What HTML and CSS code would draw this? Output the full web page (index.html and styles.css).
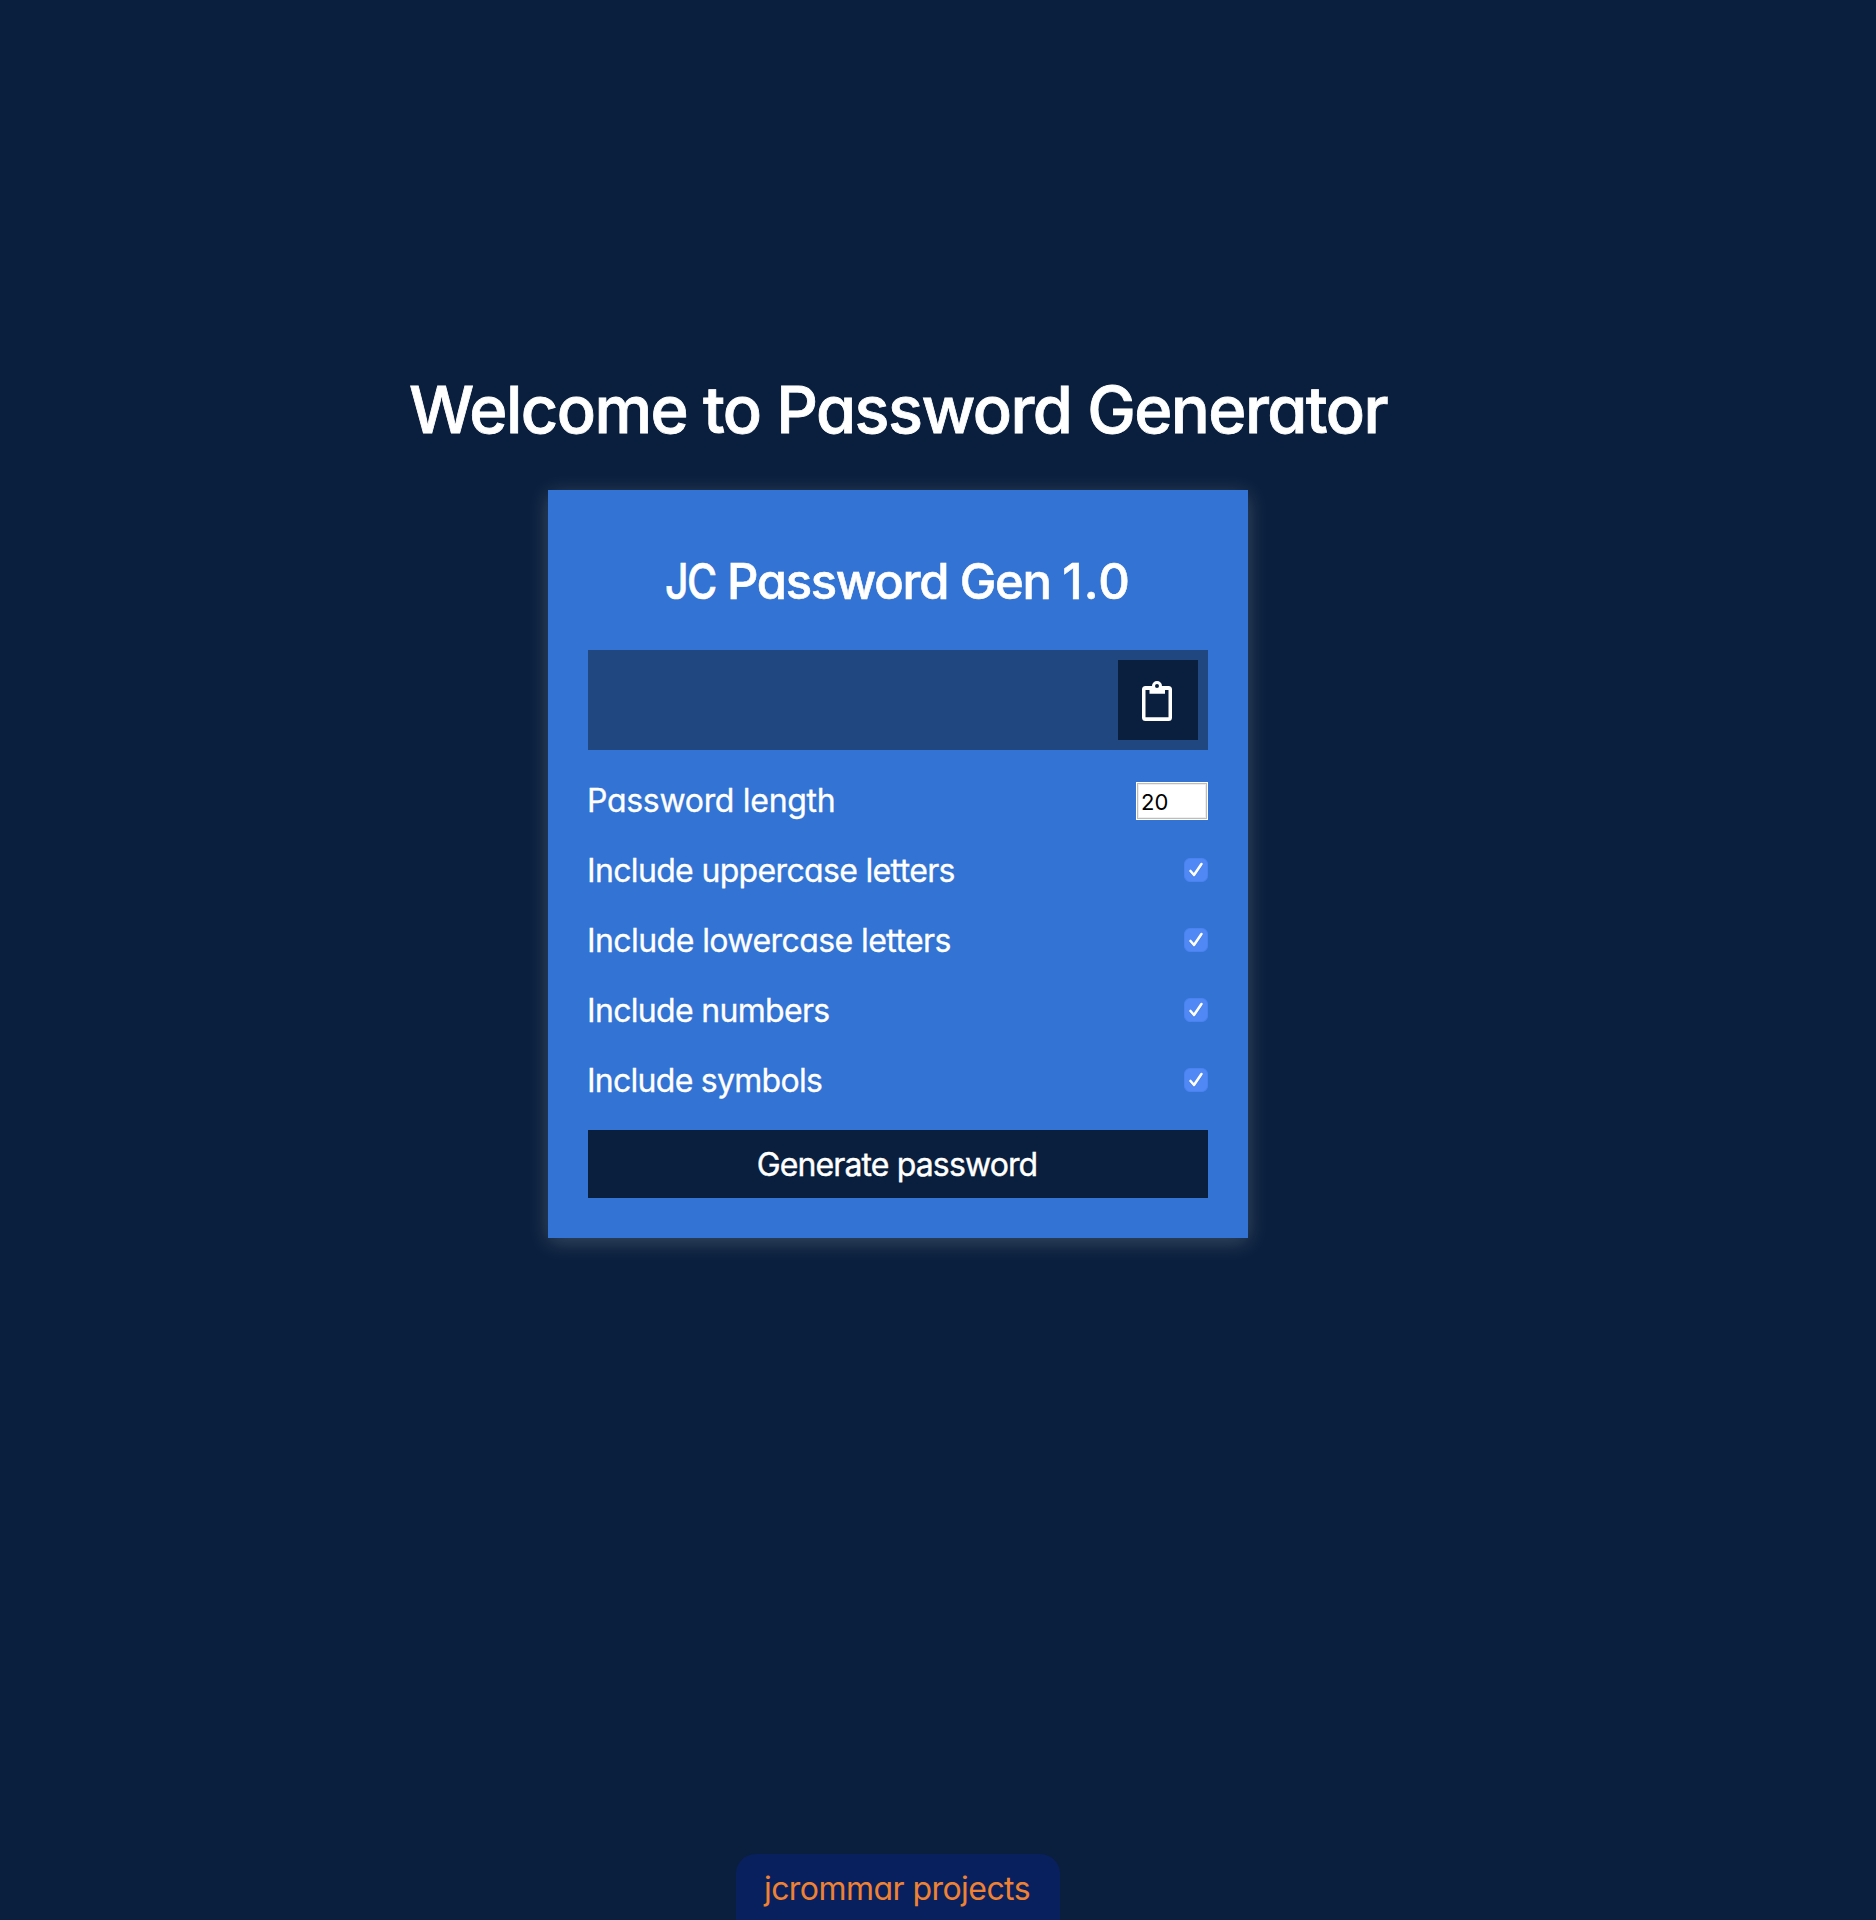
FILE: index.html
```html
<!DOCTYPE html>
<html lang="en">
<head>
<meta charset="utf-8">
<title>Password Generator</title>
<link rel="stylesheet" href="styles.css">
</head>
<body>
<main class="page">
  <h1 class="title">Welcome to Password Generator</h1>
  <section class="card">
    <h2 class="card-title"><span class="initials">JC</span> Password Gen <span class="version">1.0</span></h2>
    <div class="result">
      <button class="copy" aria-label="Copy">
        <svg class="clip" viewBox="0 0 30 40"><path fill="#fff" fill-rule="evenodd" d="M3.500 5H10a5 5 0 0 1 10 0H26.500A3.500 3.500 0 0 1 30 8.500V36.500A3.500 3.500 0 0 1 26.500 40H3.500A3.500 3.500 0 0 1 0 36.500V8.500A3.500 3.500 0 0 1 3.500 5ZM15 3a2 2 0 1 0 0 4a2 2 0 1 0 0-4ZM3.500 9V36.300H26.500V9H23V12.700H7.500V9Z"/></svg>
      </button>
    </div>
    <div class="row"><span class="label length">Password length</span><span class="number">20</span></div>
    <div class="row"><span class="label upper">Include uppercase letters</span><svg class="check" viewBox="0 0 24 24"><rect class="box" x=".5" y=".5" width="23" height="23" rx="5.500"/><path class="tick-shadow" d="M6.500 14L10 18L17.500 7"/><path class="tick" d="M6.500 13L10 17L17.500 6"/></svg></div>
    <div class="row"><span class="label lower">Include lowercase letters</span><svg class="check" viewBox="0 0 24 24"><rect class="box" x=".5" y=".5" width="23" height="23" rx="5.500"/><path class="tick-shadow" d="M6.500 14L10 18L17.500 7"/><path class="tick" d="M6.500 13L10 17L17.500 6"/></svg></div>
    <div class="row"><span class="label numbers">Include numbers</span><svg class="check" viewBox="0 0 24 24"><rect class="box" x=".5" y=".5" width="23" height="23" rx="5.500"/><path class="tick-shadow" d="M6.500 14L10 18L17.500 7"/><path class="tick" d="M6.500 13L10 17L17.500 6"/></svg></div>
    <div class="row"><span class="label symbols">Include symbols</span><svg class="check" viewBox="0 0 24 24"><rect class="box" x=".5" y=".5" width="23" height="23" rx="5.500"/><path class="tick-shadow" d="M6.500 14L10 18L17.500 7"/><path class="tick" d="M6.500 13L10 17L17.500 6"/></svg></div>
    <button class="generate">Generate password</button>
  </section>
  <footer class="tag">jcrommar projects</footer>
</main>
</body>
</html>
```
FILE: styles.css
```css
* { box-sizing: border-box; }
body {
  margin: 0;
  background: #0a1f3d;
  color: #fff;
  font-family: Inter, "Liberation Sans", sans-serif;
  font-feature-settings: "cv11";
}
.page {
  width: 1796px;
  height: 1920px;
  padding-top: 370px;
  display: flex;
  flex-direction: column;
  align-items: center;
}
.title {
  margin: 0 0 40px;
  height: 80px;
  line-height: 80px;
  font-size: 65px;
  font-weight: 550;
  letter-spacing: -1.570px;
  -webkit-text-stroke: .8px #fff;
  white-space: nowrap;
}
.card {
  width: 700px;
  height: 748px;
  padding: 40px;
  background: #3273d3;
  box-shadow: 0 4px 20px rgba(255, 255, 255, .2);
}
.card-title {
  margin: 20px 0 30px;
  height: 70px;
  line-height: 64px;
  font-size: 49px;
  font-weight: 550;
  letter-spacing: -1.350px;
  -webkit-text-stroke: .6px #fff;
  text-align: center;
  white-space: nowrap;
}
.initials {
  display: inline-block;
  margin-right: -10px;
  letter-spacing: -2px;
  transform: scaleX(.84);
  transform-origin: left;
}
.version { letter-spacing: 1px; }
.result {
  height: 100px;
  padding: 10px;
  margin-bottom: 15px;
  background: #20477f;
  display: flex;
  justify-content: flex-end;
}
.copy {
  width: 80px;
  height: 80px;
  border: 0;
  padding: 2px 2px 0 0;
  background: #0a1f3d;
  display: flex;
  align-items: center;
  justify-content: center;
}
.clip { width: 30px; height: 40px; }
.row {
  height: 70px;
  display: flex;
  align-items: center;
  justify-content: space-between;
  font-size: 32px;
  white-space: nowrap;
}
.label { margin-left: -1px; -webkit-text-stroke: .3px #fff; }
.length { letter-spacing: -.300px; }
.upper { letter-spacing: -.660px; }
.lower { letter-spacing: -.570px; }
.numbers { letter-spacing: -.680px; }
.symbols { letter-spacing: -.730px; }
.number {
  width: 72px;
  height: 38px;
  margin-top: 2px;
  padding-left: 4px;
  border: 1px solid #fff;
  background: #fff;
  box-shadow: inset 0 0 0 1px #bdbdbd, inset 0 0 0 2px #eee;
  color: #000;
  font-size: 22px;
  line-height: 38px;
}
.check { width: 24px; height: 24px; }
.box { fill: #5089f6; stroke: #4a82ef; }
.tick, .tick-shadow {
  fill: none;
  stroke: #fff;
  stroke-width: 2.600;
  stroke-linecap: round;
  stroke-linejoin: round;
}
.tick-shadow { stroke: #3769c9; opacity: .5; }
.generate {
  display: block;
  width: 100%;
  height: 68px;
  margin-top: 15px;
  padding: 0 2px 0 0;
  border: 0;
  background: #0a1f3d;
  color: #fff;
  font: 430 32px Inter, sans-serif;
  font-feature-settings: normal;
  letter-spacing: -.870px;
  -webkit-text-stroke: .4px #fff;
}
.tag {
  margin-top: auto;
  margin-right: 1px;
  width: 324px;
  height: 66px;
  padding-right: 1px;
  background: #09205f;
  color: #ef8232;
  border-radius: 20px 20px 0 0;
  font-size: 32px;
  line-height: 70px;
  letter-spacing: -.550px;
  text-align: center;
}
```
